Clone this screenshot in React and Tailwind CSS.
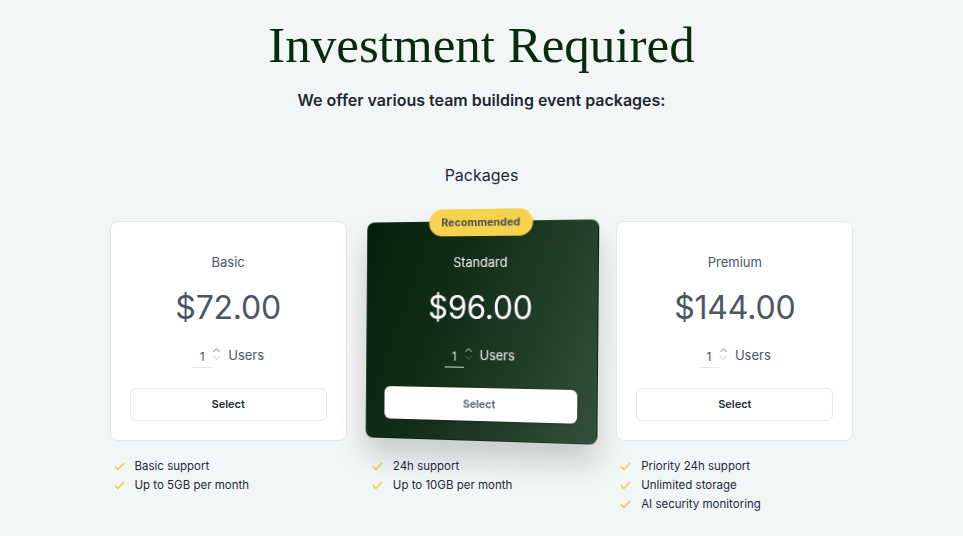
import { useState } from "react";

const packages = [
  {
    name: "Basic",
    price: 72,
    features: ["Basic support", "Up to 5GB per month"],
  },
  {
    name: "Standard",
    price: 96,
    recommended: true,
    features: ["24h support", "Up to 10GB per month"],
  },
  {
    name: "Premium",
    price: 144,
    features: ["Priority 24h support", "Unlimited storage", "AI security monitoring"],
  },
];

function Check() {
  return (
    <svg width="13" height="13" viewBox="0 0 24 24" fill="none" stroke="#f5c842" strokeWidth="2.5" strokeLinecap="round" strokeLinejoin="round">
      <path d="M4 12.5l5 5L20 6" />
    </svg>
  );
}

function Spinner() {
  return (
    <div className="flex flex-col items-center -mt-1 text-gray-400">
      <svg width="9" height="6" viewBox="0 0 10 6" fill="none" stroke="currentColor" strokeWidth="1.2">
        <path d="M1.5 5L5 1.5 8.5 5" />
      </svg>
      <svg width="9" height="6" viewBox="0 0 10 6" fill="none" stroke="currentColor" strokeWidth="1.2" className="opacity-40 mt-[2px]">
        <path d="M1.5 1L5 4.5 8.5 1" />
      </svg>
    </div>
  );
}

function Card({ pkg }) {
  const [users, setUsers] = useState(1);
  const dark = pkg.recommended;
  return (
    <div
      className={
        "relative rounded-lg border px-[19px] pt-[30px] pb-[19px] flex flex-col items-center " +
        (dark
          ? "border-transparent bg-[linear-gradient(110deg,#01200a_0%,#16301a_45%,#34503a_100%)] shadow-[0_18px_30px_rgba(0,0,0,0.18)] [transform:translateX(-2px)_perspective(1000px)_rotateY(-12deg)_rotateZ(0.5deg)]"
          : "bg-white border-[#e3e7ea]")
      }
    >
      {dark && (
        <div className="absolute -top-[13px] left-1/2 -translate-x-1/2 bg-[#f7d34d] rounded-full px-[13px] h-[27px] flex items-center text-[11px] font-bold text-[#4a4d52] whitespace-nowrap">
          Recommended
        </div>
      )}
      <div className={"text-[13px] leading-5 " + (dark ? "text-gray-100" : "text-gray-600")}>{pkg.name}</div>
      <div className={"text-[32px] leading-10 mt-[16px] tracking-[-0.2px] " + (dark ? "text-white" : "text-[#4b5563]")}>
        ${(pkg.price * users).toFixed(2)}
      </div>
      <div className="flex items-center mt-[8px] h-10">
        <div className={"w-[20px] text-center text-[12px] leading-5 border-b pt-[2px] " + (dark ? "text-gray-200 border-gray-300" : "text-gray-600 border-gray-200")}>
          {users}
        </div>
        <Spinner />
        <span className={"ml-[7px] text-[13px] " + (dark ? "text-gray-100" : "text-gray-600")}>Users</span>
      </div>
      <button
        onClick={() => setUsers(users)}
        className={
          "mt-[12px] w-full h-[33px] rounded-md text-[11px] font-semibold " +
          (dark ? "bg-white text-gray-600 shadow-[0_1px_3px_rgba(0,0,0,0.2)]" : "bg-white border border-[#e3e7ea] text-gray-800")
        }
      >
        Select
      </button>
    </div>
  );
}

export default function App() {
  return (
    <div className="min-h-screen bg-[#f3f6f7] font-['Inter',sans-serif] flex flex-col items-center">
      <h1 className="mt-[13px] text-[51px] leading-[64px] text-[#0a2a0d] font-['Liberation_Serif',serif]">
        Investment Required
      </h1>
      <p className="mt-[11px] text-[16px] font-semibold text-[#1f2733]">We offer various team building event packages:</p>
      <h2 className="mt-[51px] text-[16px] text-gray-800">Packages</h2>
      <div className="mt-[34px] w-[744px] grid grid-cols-3 gap-4">
        {packages.map((p) => (
          <div key={p.name}>
            <Card pkg={p} />
            <ul className={"mt-[19px] flex flex-col gap-[6px] " + (p.recommended ? "pl-[8px]" : "pl-[3px]")}>
              {p.features.map((f) => (
                <li key={f} className="flex items-center gap-[9px] text-[11.5px] leading-[13px] text-gray-800">
                  <Check />
                  {f}
                </li>
              ))}
            </ul>
          </div>
        ))}
      </div>
    </div>
  );
}
